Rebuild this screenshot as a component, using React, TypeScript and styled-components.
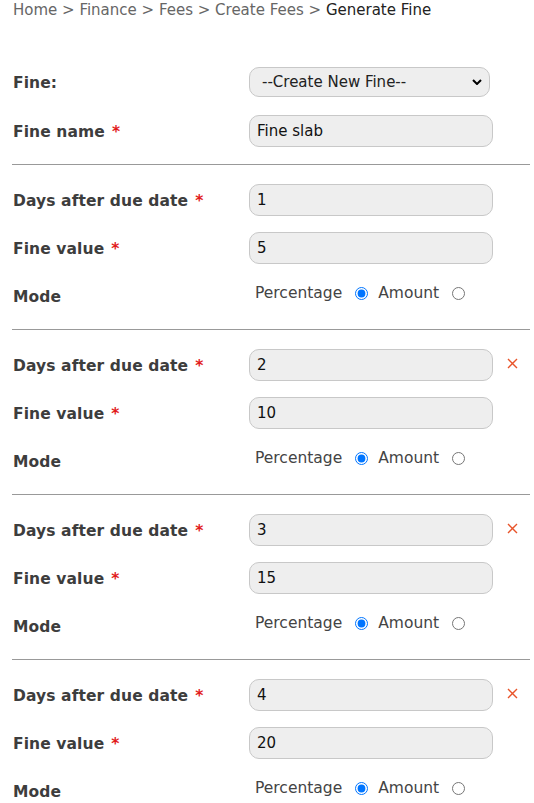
import React from "react";
import styled, { createGlobalStyle } from "styled-components";

const Global = createGlobalStyle`
  html, body { margin: 0; padding: 0; background: #fff; }
  body { font-family: "DejaVu Sans", Verdana, sans-serif; color: #444; }
  * { box-sizing: border-box; }
`;

const Page = styled.div`
  padding: 0 4px 0 12px;
  width: 534px;
`;

const Crumbs = styled.div`
  font-family: "DejaVu Sans", Tahoma, sans-serif;
  font-size: 15px;
  color: #666;
  height: 20px;
  line-height: 20px;
  padding-left: 1px;
`;

const Current = styled.span`
  color: #222;
`;

const Section = styled.div<{ $top: number }>`
  display: flex;
  flex-direction: column;
  gap: 16px;
  padding: ${(p) => p.$top}px 0 17px;
  border-bottom: 1px solid #999;
  &:last-child { border-bottom: none; }
`;

const Row = styled.div<{ $h?: number }>`
  display: grid;
  grid-template-columns: 237px 244px 37px;
  align-items: center;
  height: ${(p) => p.$h ?? 32}px;
`;

const Label = styled.div`
  font-weight: bold;
  font-size: 15.5px;
  color: #3d3d3d;
  padding: 2px 0 0 1px;
  letter-spacing: 0.1px;
`;

const Star = styled.span`
  color: #e21b1b;
  margin-left: 7px;
`;

const TextInput = styled.input`
  width: 244px;
  height: 32px;
  background: #eee;
  border: 1px solid #c8c8c8;
  border-radius: 10px;
  padding: 0 7px;
  font-family: "DejaVu Sans", Tahoma, sans-serif;
  font-size: 15px;
  color: #111;
  outline: none;
`;

const Select = styled.select`
  width: 241px;
  height: 30px;
  background: #eee;
  border: 1px solid #c8c8c8;
  border-radius: 10px;
  padding: 0 8px 0 12px;
  font-family: "DejaVu Sans", Tahoma, sans-serif;
  font-size: 15px;
  color: #222;
  outline: none;
  appearance: none;
  background-image: url("data:image/svg+xml;utf8,<svg xmlns='http://www.w3.org/2000/svg' width='10' height='6' viewBox='0 0 10 6'><path d='M1 1 L5 5 L9 1' stroke='black' stroke-width='2' fill='none'/></svg>");
  background-repeat: no-repeat;
  background-position: right 7px center;
`;

const Modes = styled.div`
  display: flex;
  align-items: center;
  padding-left: 6px;
  font-family: "DejaVu Sans", Tahoma, sans-serif;
  font-size: 15.5px;
  color: #444;
  white-space: nowrap;
  margin-top: -6px;
`;

const Radio = styled.input`
  width: 13px;
  height: 13px;
  margin: 0 10px 0 13px;
`;

const Remove = styled.span`
  display: flex;
  padding-left: 14px;
  margin-top: -4px;
  cursor: pointer;
`;

const slabs = [
  { days: "1", value: "5", removable: false },
  { days: "2", value: "10", removable: true },
  { days: "3", value: "15", removable: true },
  { days: "4", value: "20", removable: true },
];

export default function App() {
  return (
    <Page>
      <Global />
      <Crumbs>
        Home &gt; Finance &gt; Fees &gt; Create Fees &gt; <Current>Generate Fine</Current>
      </Crumbs>
      <Section $top={47}>
        <Row $h={30}>
          <Label>Fine:</Label>
          <Select defaultValue="new">
            <option value="new">--Create New Fine--</option>
          </Select>
        </Row>
        <Row style={{ marginTop: 2 }}>
          <Label>
            Fine name<Star>*</Star>
          </Label>
          <TextInput defaultValue="Fine slab" />
        </Row>
      </Section>
      {slabs.map((s, i) => (
        <Section $top={19} key={i}>
          <Row>
            <Label>
              Days after due date<Star>*</Star>
            </Label>
            <TextInput defaultValue={s.days} />
            {s.removable ? (
              <Remove>
                <svg width="11" height="11" viewBox="0 0 11 11">
                  <path d="M1 1 L10 10 M10 1 L1 10" stroke="#e8542a" strokeWidth="1.4" fill="none" />
                </svg>
              </Remove>
            ) : (
              <span />
            )}
          </Row>
          <Row>
            <Label>
              Fine value<Star>*</Star>
            </Label>
            <TextInput defaultValue={s.value} />
          </Row>
          <Row>
            <Label>Mode</Label>
            <Modes>
              Percentage
              <Radio type="radio" name={`mode${i}`} defaultChecked />
              Amount
              <Radio type="radio" name={`mode${i}`} />
            </Modes>
          </Row>
        </Section>
      ))}
    </Page>
  );
}
